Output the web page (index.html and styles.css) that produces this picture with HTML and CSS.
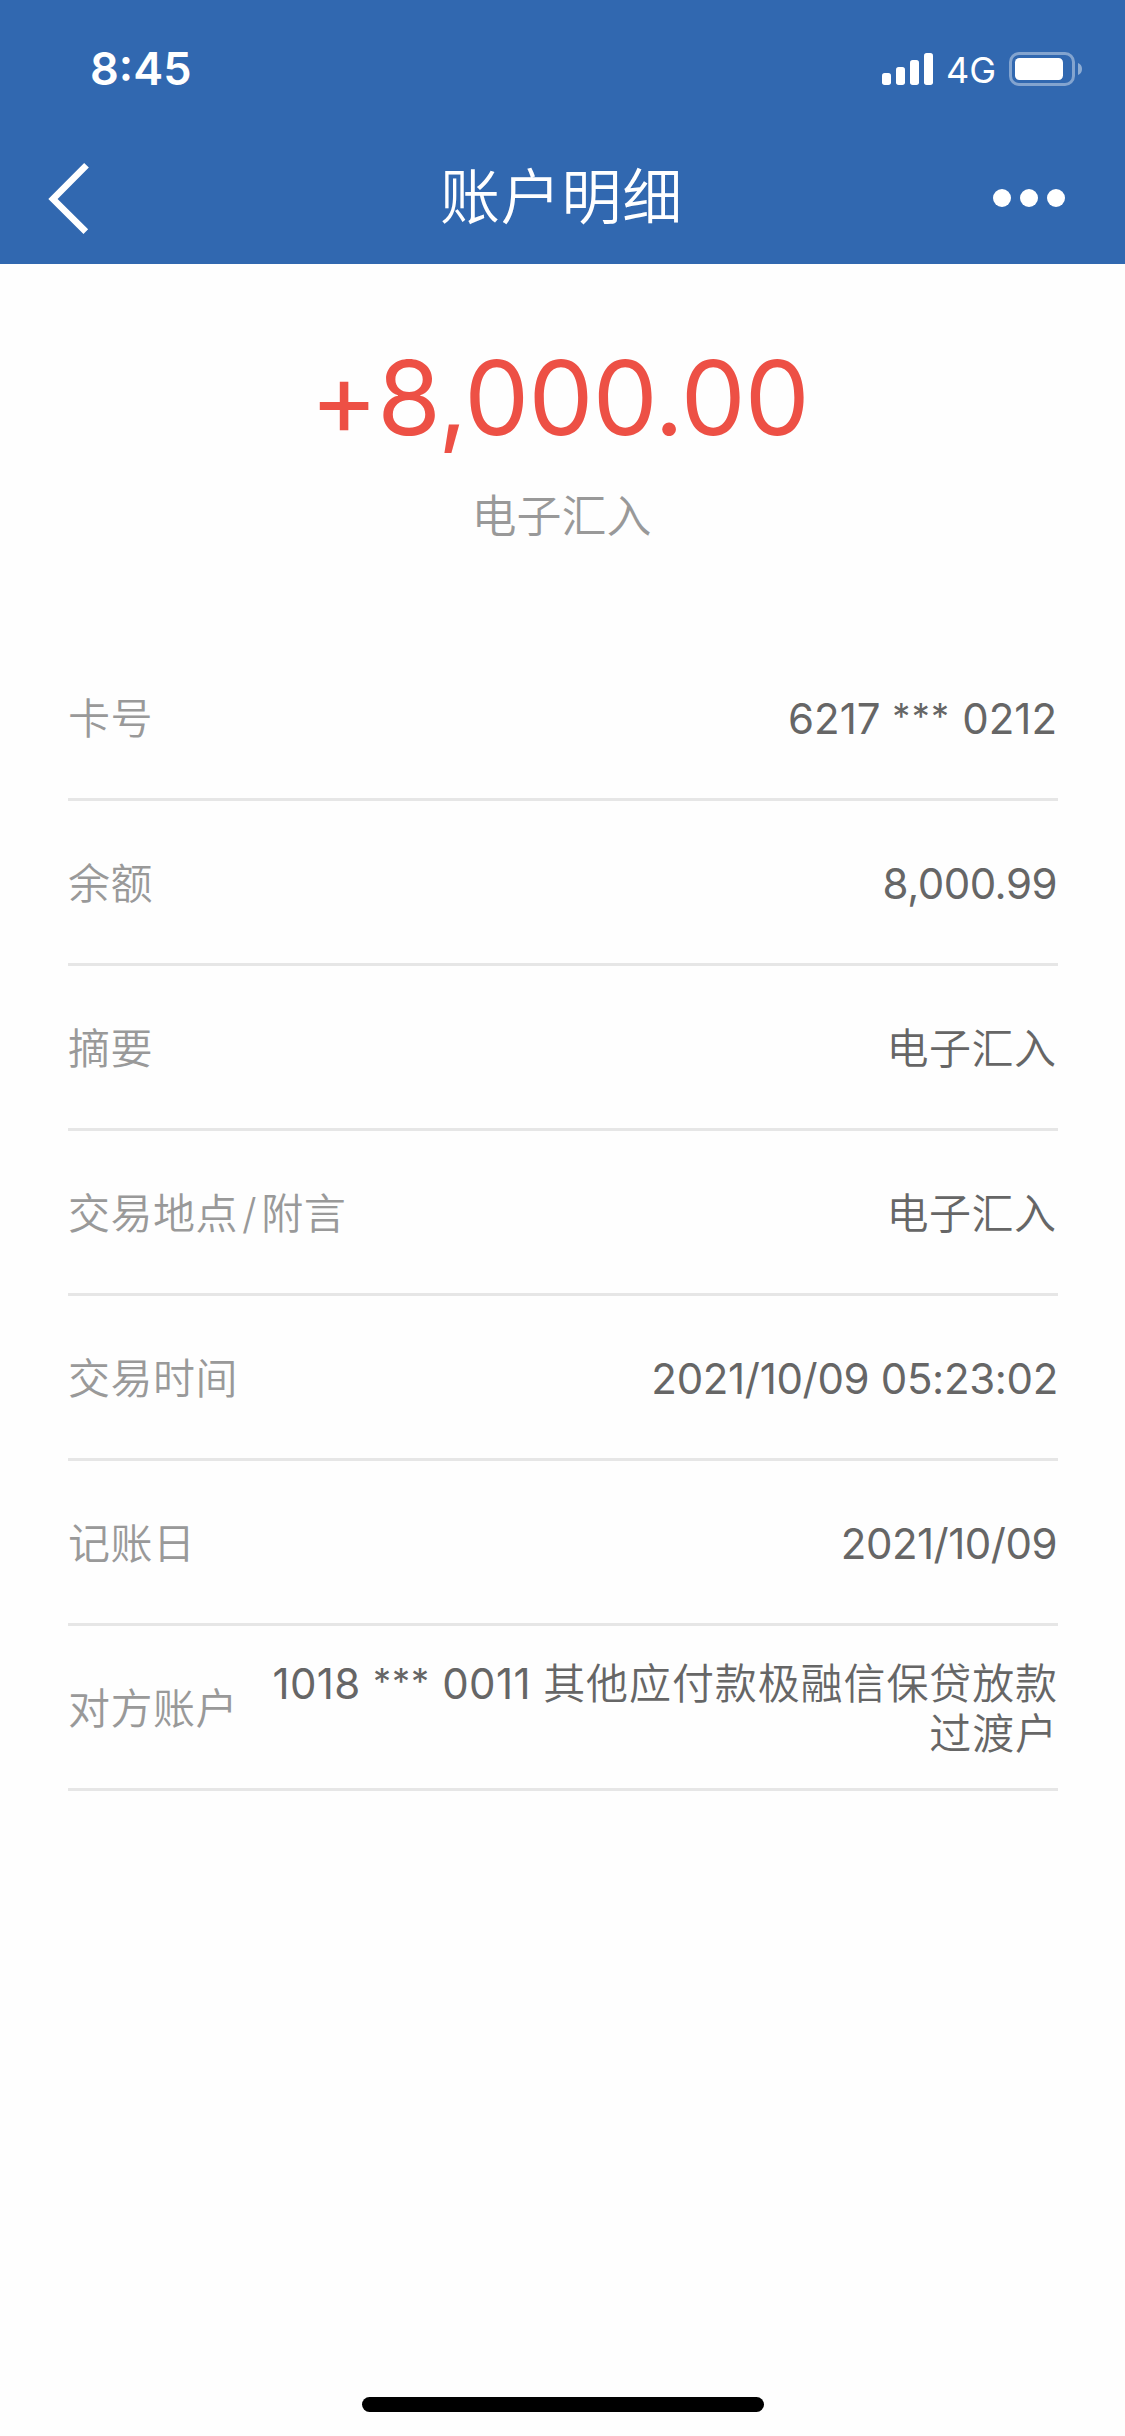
FILE: index.html
```html
<!DOCTYPE html>
<html lang="zh-CN">
<head>
<meta charset="utf-8">
<title>账户明细</title>
<link rel="stylesheet" href="styles.css">
</head>
<body>
<header class="header">
  <div class="status">
    <span class="clock">8:45</span>
    <div class="indicators">
      <svg class="signal" viewBox="0 0 51 34" fill="#fff">
        <rect x="0" y="21" width="9" height="12" rx="2.7"/>
        <rect x="14" y="15" width="9" height="18" rx="2.7"/>
        <rect x="28" y="8" width="9" height="25" rx="2.7"/>
        <rect x="42" y="1" width="9" height="32" rx="2.7"/>
      </svg>
      <span class="network">4G</span>
      <svg class="battery" viewBox="0 0 74 34">
        <rect x="1.5" y="1.5" width="63" height="31" rx="8.5" fill="none" stroke="#fff" stroke-width="3" opacity=".4"/>
        <rect x="6" y="6" width="48" height="22" rx="4.5" fill="#fff"/>
        <path d="M69 11c2.6 1 4 3.300 4 6s-1.400 5-4 6z" fill="#fff" opacity=".45"/>
      </svg>
    </div>
  </div>
  <nav class="nav">
    <svg class="back" viewBox="0 0 42 74" fill="none" stroke="#fff" stroke-width="6.600">
      <path d="M38.500 3.200L5 37l32.800 32.600"/>
    </svg>
    <h1 class="title">账户明细</h1>
    <svg class="more" viewBox="0 0 72 18" fill="#fff">
      <circle cx="9" cy="9" r="9"/><circle cx="36" cy="9" r="9"/><circle cx="63" cy="9" r="9"/>
    </svg>
  </nav>
</header>
<main class="content">
  <p class="amount">+8,000.00</p>
  <p class="summary">电子汇入</p>
  <dl class="details">
    <div class="row"><dt>卡号</dt><dd class="card">6217 <span class="mask">***</span> 0212</dd></div>
    <div class="row"><dt>余额</dt><dd class="num">8,000.99</dd></div>
    <div class="row"><dt>摘要</dt><dd class="han">电子汇入</dd></div>
    <div class="row"><dt>交易地点<span class="slash">/</span>附言</dt><dd class="han">电子汇入</dd></div>
    <div class="row"><dt>交易时间</dt><dd class="time">2021/10/09 05:23:02</dd></div>
    <div class="row"><dt>记账日</dt><dd class="num">2021/10/09</dd></div>
    <div class="row"><dt>对方账户</dt><dd class="party"><span class="acct">1018 <span class="mask">***</span> 0011 </span>其他应付款极融信保贷放款<br>过渡户</dd></div>
  </dl>
</main>
<footer class="footer"><div class="home-bar"></div></footer>
</body>
</html>
```
FILE: styles.css
```css
* { box-sizing: border-box; margin: 0; padding: 0; }

body {
  display: flex;
  flex-direction: column;
  width: 1125px;
  height: 2436px;
  background: #fefefe;
  font-family: "Inter", "Noto Sans CJK SC", sans-serif;
  font-weight: 400;
}

.header { height: 264px; background: #3168b0; color: #fff; }

.status {
  display: flex;
  justify-content: space-between;
  align-items: center;
  height: 138px;
  padding: 0 42px 0 90px;
}
.clock { font-size: 45px; font-weight: 560; line-height: 54px; }
.indicators { display: flex; align-items: center; }
.signal { width: 51px; height: 34px; }
.network { margin: 2px 13px 0 13px; font-size: 36px; line-height: 44px; width: 50px; }
.battery { width: 74px; height: 34px; }

.nav {
  display: grid;
  grid-template-columns: 120px 1fr 120px;
  align-items: center;
  height: 120px;
  padding: 0 60px 0 48px;
}
.back { width: 42px; height: 74px; margin-top: 2px; }
.title {
  padding-left: 10px;
  font-size: 60px;
  font-weight: 350;
  line-height: 80px;
  letter-spacing: .8px;
  text-align: center;
  margin-top: -2px;
}
.more { width: 72px; height: 18px; justify-self: end; }

.content { flex: 1; padding: 74px 67px 0 68px; }

.amount {
  padding-right: 7px;
  color: #ed5045;
  font-size: 103px;
  line-height: 120px;
  letter-spacing: -.75px;
  text-align: center;
}
.summary {
  margin-top: 29px;
  padding-right: 3px;
  color: #999;
  font-size: 45px;
  font-weight: 350;
  line-height: 60px;
  text-align: center;
}

.details { margin-top: 89px; font-size: 42px; line-height: 50px; }
.row {
  display: flex;
  justify-content: space-between;
  align-items: center;
  height: 165px;
  padding-top: 3px;
  border-bottom: 3px solid #e6e6e6;
}
.row dt { color: #999; font-weight: 350; letter-spacing: .5px; white-space: nowrap; }
.row dd { color: #666; text-align: right; white-space: nowrap; }
.slash { margin: 0 4px; }
.card { padding-right: 1px; }
.row .num { padding-right: 1px; letter-spacing: -.5px; }
.time { letter-spacing: -.33px; }
.row .han { padding-right: 1.5px; font-weight: 350; letter-spacing: .5px; }
.row .party { font-weight: 350; letter-spacing: .9px; }
.acct { font-weight: 400; letter-spacing: .4px; }
.mask { font-size: 36px; line-height: 0; letter-spacing: 1.300px; vertical-align: 5px; }
.acct .mask { letter-spacing: 1px; }

.footer { display: flex; justify-content: center; height: 39px; }
.home-bar { width: 402px; height: 15px; border-radius: 7.500px; background: #000; }
```
